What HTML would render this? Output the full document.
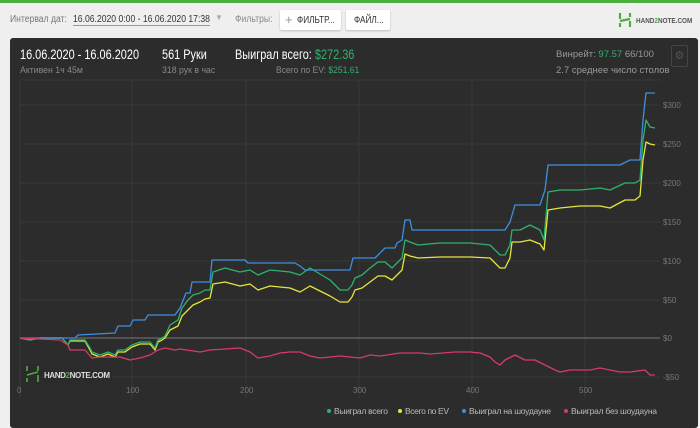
<!DOCTYPE html>
<html><head><meta charset="utf-8"><style>
body{margin:0;width:700px;height:426px;overflow:hidden;background:#efefef;font-family:"Liberation Sans",sans-serif;position:relative}
.top{position:absolute;left:0;top:0;width:700px;height:3px;background:#4cae3f}
.t{position:absolute;white-space:nowrap;transform-origin:left top}
.btn{position:absolute;background:#fff;border-radius:2px;box-shadow:0 1px 2px rgba(0,0,0,.2);height:20px}
.panel{position:absolute;left:10px;top:38px;width:688px;height:390px;background:#2c2c2c;border-radius:3px}
</style></head><body>
<div class="top"></div>
<div class="t" style="left:10px;top:14px;font-size:10px;color:#777;transform:scaleX(.86)">Интервал дат:</div>
<div class="t" style="left:73px;top:13px;font-size:10.5px;color:#333;border-bottom:1px solid #999;transform:scaleX(.82)">16.06.2020 0:00 - 16.06.2020 17:38</div>
<div class="t" style="left:215px;top:13px;font-size:8px;color:#aaa">▼</div>
<div class="t" style="left:235px;top:14px;font-size:10px;color:#888;transform:scaleX(.86)">Фильтры:</div>
<div class="btn" style="left:280px;top:10px;width:61px"></div>
<div class="t" style="left:285px;top:12px;font-size:13px;color:#999">+</div>
<div class="t" style="left:297px;top:15px;font-size:10px;color:#333;transform:scaleX(.82)">ФИЛЬТР...</div>
<div class="btn" style="left:346px;top:10px;width:44px"></div>
<div class="t" style="left:354px;top:15px;font-size:10px;color:#333;transform:scaleX(.82)">ФАЙЛ...</div>
<svg style="position:absolute;left:618px;top:12px" width="14" height="16"><path d="M2 1v6M12 1v4M2 15v-4M12 15v-6M2 9l10-2" stroke="#4cae3f" stroke-width="2.2" fill="none"/></svg>
<div class="t" style="left:636px;top:16px;font-size:7.5px;font-weight:bold;color:#555;transform:scaleX(.85)">HAND<span style="color:#4cae3f">2</span>NOTE.COM</div>
<div class="panel"></div>
<div class="t" style="left:20px;top:46px;font-size:14px;color:#fff;transform:scaleX(.78)">16.06.2020 - 16.06.2020</div>
<div class="t" style="left:20px;top:65px;font-size:9.5px;color:#888;transform:scaleX(.92)">Активен 1ч 45м</div>
<div class="t" style="left:162px;top:46px;font-size:14px;color:#fff;transform:scaleX(.78)">561 Руки</div>
<div class="t" style="left:162px;top:65px;font-size:9.5px;color:#888;transform:scaleX(.92)">318 рук в час</div>
<div class="t" style="left:235px;top:46px;font-size:14px;color:#fff;transform:scaleX(.78)">Выиграл всего: <span style="color:#2db36b">$272.36</span></div>
<div class="t" style="left:276px;top:65px;font-size:9.5px;color:#888;transform:scaleX(.9)">Всего по EV: <span style="color:#2db36b">$251.61</span></div>
<div class="t" style="left:556px;top:49px;font-size:9.5px;color:#999;transform:scaleX(1)">Винрейт: <span style="color:#2db36b">97.57</span> 66/100</div>
<div class="t" style="left:556px;top:65px;font-size:9.5px;color:#999;transform:scaleX(1)">2.7 среднее число столов</div>
<div style="position:absolute;left:671px;top:45px;width:15px;height:20px;border:1px solid #444;border-radius:2px;color:#555;font-size:11px;text-align:center;line-height:20px">⚙</div>
<svg style="position:absolute;left:0;top:0" width="700" height="426">
<g stroke="#383838" stroke-width="1">
<path d="M20 80V398M132 80V398M246 80V398M359 80V398M472 80V398M585 80V398M20 80H660"/>
<path d="M20 105H660M20 144H660M20 183H660M20 222H660M20 261H660M20 300H660M20 377H660"/>
</g>
<path d="M20 338H660" stroke="#777" stroke-width="1"/>
<g font-size="8" fill="#777" font-family="Liberation Sans">
<text x="663" y="108">$300</text><text x="663" y="147">$250</text><text x="663" y="186">$200</text><text x="663" y="225">$150</text><text x="663" y="264">$100</text><text x="663" y="303">$50</text><text x="663" y="341">$0</text><text x="663" y="380">-$50</text>
<text x="17" y="393">0</text><text x="126" y="393">100</text><text x="240" y="393">200</text><text x="353" y="393">300</text><text x="466" y="393">400</text><text x="579" y="393">500</text>
</g>
<g fill="none" stroke-width="1.3" stroke-linejoin="round">
<polyline stroke="#e6e63a" points="20,338 30,340 40,338 62,338 68,345 70,341 85,341 90,350 92,354 100,357 108,354 115,357 118,352 125,352 132,347 140,344 150,344 155,350 158,342 162,340 165,338 170,330 178,326 182,316 188,310 193,305 200,302 205,299 210,298 213,284 225,282 240,286 250,284 258,290 270,286 290,288 300,292 310,286 330,296 340,302 348,302 352,297 355,290 362,288 370,282 378,276 385,276 392,280 398,274 402,270 405,254 410,256 418,258 440,257 470,257 490,258 500,268 505,268 510,258 512,242 520,242 530,240 540,244 544,250 548,210 560,208 580,206 600,206 610,208 625,200 635,200 640,196 643,160 646,142 650,144 655,145"/>
<polyline stroke="#2db36b" points="20,338 30,340 40,338 62,338 68,345 70,340 85,340 90,348 92,352 100,355 108,352 115,355 118,350 125,350 132,345 140,342 150,342 155,348 158,340 162,338 165,336 170,325 178,320 182,308 188,300 193,295 200,293 205,290 210,290 213,272 225,268 240,272 250,270 258,275 270,270 290,272 300,275 310,268 330,280 340,290 348,290 352,285 355,278 362,275 370,268 378,262 385,262 392,268 398,262 402,258 405,240 410,242 418,245 440,243 470,243 490,245 500,255 505,255 510,245 512,230 520,230 530,225 540,230 544,240 548,192 560,190 580,190 600,188 610,190 625,183 635,183 640,180 643,140 646,120 650,127 655,128"/>
<polyline stroke="#3d8fe0" points="20,338 75,338 78,335 115,333 118,326 130,326 133,320 145,320 148,315 175,315 180,308 186,293 190,293 192,282 210,282 212,260 245,260 248,263 295,263 300,266 305,270 350,270 353,258 375,258 380,253 385,248 395,248 397,243 402,240 405,220 410,220 412,230 505,230 510,222 515,205 540,205 545,190 548,165 620,165 630,160 640,160 643,120 646,93 655,93"/>
<polyline stroke="#d63a6a" points="20,338 60,340 68,345 70,350 85,350 92,358 100,357 120,357 130,360 140,358 150,355 158,350 165,348 175,350 180,349 200,352 210,350 240,348 250,352 258,358 270,356 280,353 290,352 300,352 310,356 320,358 340,356 350,357 360,358 370,355 380,356 400,353 420,353 430,354 455,352 470,352 480,353 490,357 495,362 500,365 505,360 515,355 525,360 535,360 545,365 555,370 560,372 570,370 590,370 600,368 610,370 620,372 630,372 645,370 650,375 655,375"/>
</g>
<rect x="22" y="364" width="90" height="20" fill="#2c2c2c" opacity=".8"/>
<path d="M27 366v5M38 366v5M27 382v-4M38 382v-7M27 375l11-3" stroke="#4cae3f" stroke-width="1.6" fill="none"/>
<text x="44" y="378" font-size="8" font-weight="bold" fill="#ddd" font-family="Liberation Sans" textLength="66">HAND<tspan fill="#4cae3f">2</tspan>NOTE.COM</text>
<g font-size="8.5" fill="#bbb" font-family="Liberation Sans">
<circle cx="329" cy="411" r="2" fill="#2db36b"/><text x="334" y="414" textLength="54">Выиграл всего</text>
<circle cx="400" cy="411" r="2" fill="#e6e63a"/><text x="405" y="414" textLength="44">Всего по EV</text>
<circle cx="464" cy="411" r="2" fill="#3d8fe0"/><text x="469" y="414" textLength="82">Выиграл на шоудауне</text>
<circle cx="566" cy="411" r="2" fill="#d63a6a"/><text x="571" y="414" textLength="86">Выиграл без шоудауна</text>
</g>
</svg>
</body></html>
